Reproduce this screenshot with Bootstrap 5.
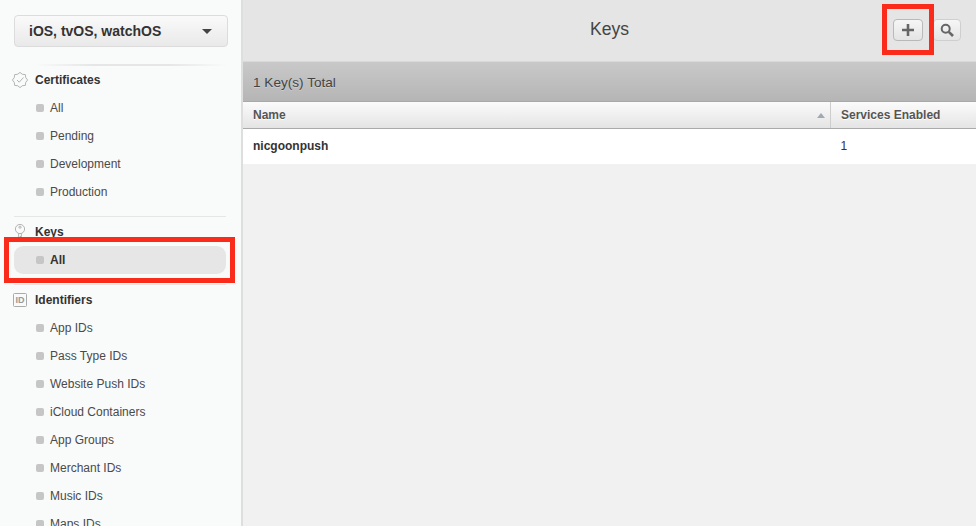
<!DOCTYPE html>
<html lang="en">
  <head>
    <meta charset="UTF-8" />
    <meta name="viewport" content="width=device-width, initial-scale=1.0" />
    <title>Keys</title>
    <link href="https://cdn.jsdelivr.net/npm/bootstrap@5.3.3/dist/css/bootstrap.min.css" rel="stylesheet" />
    <style>
      html, body { height: 526px; overflow: hidden; }
      body { font-family: "Liberation Sans", Arial, sans-serif; font-size: 12px; color: #333; background: #f1f1f1; position: relative; }
      .side-pane { width: 243px; flex: none; height: 526px; overflow: hidden; background: #f9fafa; border-right: 2px solid #dedede; }
      .platform-btn { margin: 15px 0 0 14px; width: 214px; height: 32px; padding: 0 15px 0 14px; font-size: 14px; font-weight: 700; color: #333; border: 1px solid #dcdcdc; border-radius: 4px; background: linear-gradient(#fafafa, #e9e9e9); }
      .caret-down { width: 0; height: 0; border-left: 5px solid transparent; border-right: 5px solid transparent; border-top: 5px solid #444; }
      .side-rule { height: 2px; margin: 17px 14px 0 35px; background: linear-gradient(to right, #f9fafa, #e6e6e6 30%, #e6e6e6 70%, #f9fafa); }
      .side-group { margin: 0 15px 1px 14px; padding-bottom: 10px; border-bottom: 1px solid #e6e6e6; }
      .side-group.no-rule { border-bottom: 0; }
      .group-title { height: 28px; font-weight: 700; color: #333; margin-left: -2px; gap: 7px; }
      .group-icon { width: 16px; height: 16px; flex: none; }
      .side-item { height: 28px; padding-left: 22px; gap: 6px; color: #4a4a4a; }
      .side-item.on { background: #e6e6e6; border-radius: 9px; font-weight: 700; color: #333; }
      .item-dot { width: 8px; height: 8px; background: #c6c6c6; border-radius: 2px; flex: none; }
      .keys-head { height: 62px; flex: none; padding-bottom: 2px; background: #e5e5e5; border-bottom: 1px solid #d9d9d9; position: relative; }
      .keys-title { font-size: 17.6px; color: #444; }
      .head-tools { position: absolute; top: 19px; right: 15px; gap: 10px; }
      .tool-btn { height: 22px; border: 1px solid #b9b9b9; border-radius: 4px; background: linear-gradient(#f6f6f6, #e4e4e4); padding: 0; }
      .tool-add { width: 30px; }
      .tool-find { width: 28px; border-color: #cfcfcf; }
      .total-bar { height: 40px; flex: none; padding: 3px 0 0 10px; font-size: 13.6px; color: #444; text-shadow: 0 1px 0 rgba(255, 255, 255, .3); background: linear-gradient(#c9c9c9, #b5b5b5); border-bottom: 1px solid #a9a9a9; }
      .keys-table { width: 100%; table-layout: fixed; margin: 0; font-size: 12px; }
      .keys-table th { height: 26px; padding: 0 10px; vertical-align: middle; color: #555; text-shadow: 0 1px 0 #fff; background: linear-gradient(#fbfbfb, #e4e4e4); border-bottom: 1px solid #aaa; position: relative; }
      .keys-table th + th { border-left: 1px solid #cdcdcd; }
      .keys-table td { height: 36px; padding: 0 10px; vertical-align: middle; background: #fff; color: #333; border: 0; }
      .keys-table th + th, .keys-table td + td { padding-left: 10.5px; }
      .name-col { width: 587px; }
      .sort-up { position: absolute; right: 5px; top: 11px; width: 0; height: 0; border-left: 4px solid transparent; border-right: 4px solid transparent; border-bottom: 5px solid #a0aab4; }
      .red-mark { position: absolute; border: 5px solid #fb2b1b; pointer-events: none; }
      .mark-all { left: 4px; top: 237px; width: 231px; height: 46px; }
      .mark-add { left: 882px; top: 4px; width: 52px; height: 51px; }
    </style>
  </head>
  <body>
    <div class="d-flex">
      <aside class="side-pane">
        <button class="platform-btn d-flex align-items-center justify-content-between" type="button">
          <span>iOS, tvOS, watchOS</span><span class="caret-down"></span>
        </button>
        <div class="side-rule"></div>

        <div class="side-group">
          <div class="group-title d-flex align-items-center">
            <svg class="group-icon" viewBox="0 0 16 16" fill="none" stroke="#a2a2a2" stroke-width=".8"><path d="M15.600 8L13.730 10.370 13.370 13.370 10.370 13.730 8 15.600 5.630 13.730 2.630 13.370 2.270 10.370.4 8 2.270 5.630 2.630 2.630 5.630 2.270 8 .4 10.370 2.270 13.370 2.630 13.730 5.630z"/><path d="M5 8l2.200 2.200L11.500 5.500"/></svg>
            <span>Certificates</span>
          </div>
          <div class="side-item d-flex align-items-center"><span class="item-dot"></span>All</div>
          <div class="side-item d-flex align-items-center"><span class="item-dot"></span>Pending</div>
          <div class="side-item d-flex align-items-center"><span class="item-dot"></span>Development</div>
          <div class="side-item d-flex align-items-center"><span class="item-dot"></span>Production</div>
        </div>

        <div class="side-group">
          <div class="group-title d-flex align-items-center">
            <svg class="group-icon" viewBox="0 0 16 16" fill="none" stroke="#a2a2a2" stroke-width=".8"><circle cx="8" cy="5" r="4.600"/><circle cx="8" cy="3.200" r="1.100"/><path d="M6.600 9.400V14.500L8 16l1.400-1.500V13.500H8v-1h1.400V9.400"/></svg>
            <span>Keys</span>
          </div>
          <div class="side-item on d-flex align-items-center"><span class="item-dot"></span>All</div>
        </div>

        <div class="side-group no-rule">
          <div class="group-title d-flex align-items-center">
            <svg class="group-icon" viewBox="0 0 16 16" fill="none"><rect x="1.500" y="1.500" width="13" height="13" rx="1" stroke="#aaa"/><text x="8" y="11.300" font-size="9" text-anchor="middle" fill="#999" stroke="none" font-family="Liberation Sans, sans-serif">ID</text></svg>
            <span>Identifiers</span>
          </div>
          <div class="side-item d-flex align-items-center"><span class="item-dot"></span>App IDs</div>
          <div class="side-item d-flex align-items-center"><span class="item-dot"></span>Pass Type IDs</div>
          <div class="side-item d-flex align-items-center"><span class="item-dot"></span>Website Push IDs</div>
          <div class="side-item d-flex align-items-center"><span class="item-dot"></span>iCloud Containers</div>
          <div class="side-item d-flex align-items-center"><span class="item-dot"></span>App Groups</div>
          <div class="side-item d-flex align-items-center"><span class="item-dot"></span>Merchant IDs</div>
          <div class="side-item d-flex align-items-center"><span class="item-dot"></span>Music IDs</div>
          <div class="side-item d-flex align-items-center"><span class="item-dot"></span>Maps IDs</div>
        </div>
      </aside>

      <main class="flex-grow-1 d-flex flex-column">
        <div class="keys-head d-flex align-items-center justify-content-center">
          <span class="keys-title">Keys</span>
          <div class="head-tools d-flex">
            <button class="tool-btn tool-add d-flex align-items-center justify-content-center" type="button" aria-label="Add">
              <svg width="14" height="14" viewBox="0 0 14 14"><path d="M5.700 1h2.600v4.700H13v2.600H8.300V13H5.700V8.300H1V5.700h4.700z" fill="#666"/></svg>
            </button>
            <button class="tool-btn tool-find d-flex align-items-center justify-content-center" type="button" aria-label="Search">
              <svg width="14" height="14" viewBox="0 0 14 14" fill="none" stroke="#666"><circle cx="5.700" cy="5.700" r="4" stroke-width="2"/><path d="M8.800 8.800L13 13" stroke-width="2.600"/></svg>
            </button>
          </div>
        </div>
        <div class="total-bar d-flex align-items-center">1 Key(s) Total</div>
        <table class="table keys-table">
          <colgroup><col class="name-col" /><col /></colgroup>
          <thead>
            <tr><th>Name<span class="sort-up"></span></th><th>Services Enabled</th></tr>
          </thead>
          <tbody>
            <tr><td class="fw-bold">nicgoonpush</td><td>1</td></tr>
          </tbody>
        </table>
      </main>
    </div>

    <div class="red-mark mark-all"></div>
    <div class="red-mark mark-add"></div>

    <script src="https://cdn.jsdelivr.net/npm/bootstrap@5.3.3/dist/js/bootstrap.bundle.min.js"></script>
  </body>
</html>
